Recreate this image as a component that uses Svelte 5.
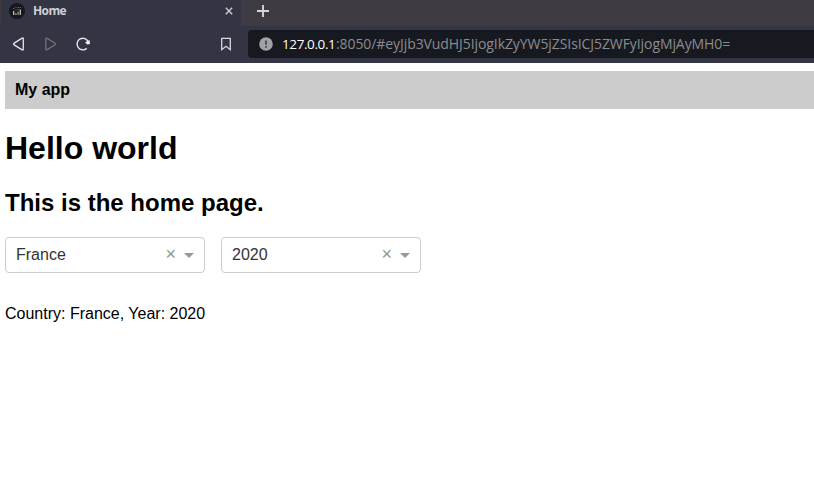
<script>
  const host = '127.0.0.1';
  const path = ':8050/#eyJjb3VudHJ5IjogIkZyYW5jZSIsICJ5ZWFyIjogMjAyMH0=';
  let country = $state('France');
  let year = $state('2020');
</script>

{#snippet dropdown(value)}
  <div class="select">
    <span class="value">{value}</span>
    <span class="clear">×</span>
    <span class="arrow"></span>
  </div>
{/snippet}

<div class="window">
  <header class="browser">
    <div class="tabs">
      <div class="tab">
        <svg class="favicon" width="16" height="16" viewBox="0 0 16 16">
          <circle cx="8" cy="8" r="8" fill="#17181d" />
          <path d="M4.7 8v4M11.3 6.5V12" stroke="#c9c9cc" stroke-width="1.2" />
          <path d="M6.9 10v2M9.1 8.5V12" stroke="#a09a88" stroke-width="1.2" />
          <path d="M4 5.5h1.4M6.3 4.5h1.2M6.3 7h1.2" stroke="#8d4855" stroke-width="1.2" />
          <path d="M8.5 4.5h1.3M8.5 6.5h1.3M10.8 4.5H12" stroke="#46759a" stroke-width="1.2" />
        </svg>
        <span class="title">Home</span>
        <svg class="close" width="8" height="8" viewBox="0 0 8 8">
          <path d="M.8.8l6.4 6.4M7.2.8L.8 7.2" stroke="#c9cbd0" stroke-width="1.4" />
        </svg>
      </div>
      <svg class="plus" width="12" height="12" viewBox="0 0 12 12">
        <path d="M6 0v12M0 6h12" stroke="#d5d5d7" stroke-width="1.9" />
      </svg>
    </div>
    <div class="toolbar">
      <svg class="nav" width="248" height="37" viewBox="0 26 248 37" fill="none">
        <path d="M21.7 38.4Q23.3 37.2 23.3 39v10q0 1.8-1.6.6l-7.5-4.7q-1.4-.9 0-1.8z" stroke="#e4e5e9" stroke-width="1.3" />
        <path d="M47.3 38.4Q45.8 37.2 45.8 39v10q0 1.8 1.5.6l7.4-4.7q1.4-.9 0-1.8z" stroke="#7b7974" stroke-width="1.2" />
        <path d="M86.7 48.4A5.8 5.8 0 1 1 88.3 42" stroke="#e4e5e9" stroke-width="1.4" />
        <path d="M85.2 42.2l4.3-2.3.5 4.2-2.9.5z" fill="#f0f1f3" />
        <path d="M221.7 38.4h8.6v11.3L226 46.3l-4.3 3.4z" stroke="#d8d9dd" stroke-width="1.3" />
      </svg>
      <div class="address">
        <svg class="info" width="14" height="14" viewBox="0 0 14 14">
          <circle cx="7" cy="7" r="6.8" fill="#a0a2a5" />
          <path d="M7 3.4v4.4M7 9v1.8" stroke="#4c4b4d" stroke-width="1.8" />
        </svg>
        <span class="host">{host}</span><span class="path">{path}</span>
      </div>
    </div>
  </header>
  <main>
    <nav>My app</nav>
    <h1>Hello world</h1>
    <h2>This is the home page.</h2>
    <div class="filters">
      {@render dropdown(country)}
      {@render dropdown(year)}
    </div>
    <p>Country: {country}, Year: {year}</p>
  </main>
</div>

<style>
  .window {
    height: 495px;
    overflow: hidden;
    background: #fff;
    color: #000;
    font-family: "Liberation Sans", sans-serif;
    font-size: 16px;
  }
  .browser {
    height: 63px;
    background: #333544;
    font-family: "Open Sans", "Noto Sans", sans-serif;
  }
  .tabs {
    display: flex;
    height: 26px;
    background: #3e3c42;
  }
  .tab {
    display: flex;
    align-items: center;
    box-sizing: border-box;
    width: 241px;
    padding: 0 8px 4px 8px;
    background: #333544;
    border-left: 1px solid #3e3c42;
  }
  .title {
    flex: 1;
    margin-left: 8px;
    color: #cfd0d4;
    font-size: 12px;
    line-height: 16px;
    font-weight: 700;
    letter-spacing: -0.6px;
  }
  .plus {
    margin: 5px 0 0 16px;
  }
  .toolbar {
    display: flex;
    height: 37px;
  }
  .nav {
    flex: none;
  }
  .address {
    display: flex;
    align-items: center;
    flex: 1;
    box-sizing: border-box;
    height: 28px;
    margin-top: 4px;
    padding-left: 11px;
    background: #171920;
    border-radius: 4px 0 0 4px;
    font-size: 14px;
    line-height: 20px;
    white-space: nowrap;
  }
  .host {
    flex: none;
    width: 54px;
    margin-left: 9px;
    color: #fff;
    font-size: 13.5px;
    letter-spacing: -0.4px;
  }
  .path {
    color: #8b8c8f;
    letter-spacing: -0.08px;
  }
  main {
    padding: 8px 0 0 5px;
  }
  nav {
    height: 38px;
    padding-left: 10px;
    background: #ccc;
    font-weight: 700;
    line-height: 37px;
  }
  h1 {
    margin: 21px 0 0;
    font-size: 32px;
    line-height: 37px;
  }
  h2 {
    margin: 22px 0 0;
    font-size: 24px;
    line-height: 28px;
  }
  .filters {
    display: flex;
    gap: 16px;
    margin-top: 20px;
  }
  .select {
    display: flex;
    align-items: center;
    box-sizing: border-box;
    width: 200px;
    height: 36px;
    padding: 0 10px;
    border: 1px solid #ccc;
    border-radius: 4px;
    color: #333;
    line-height: 34px;
  }
  .value {
    flex: 1;
  }
  .clear {
    color: #8f9491;
    font-size: 18px;
    line-height: 32px;
    margin: 0 8px 2px 0;
  }
  .arrow {
    border: 5px solid transparent;
    border-top-color: #999;
    border-bottom: 0;
    margin-top: 1px;
  }
  p {
    margin: 32px 0 0;
    line-height: 18px;
  }
</style>
